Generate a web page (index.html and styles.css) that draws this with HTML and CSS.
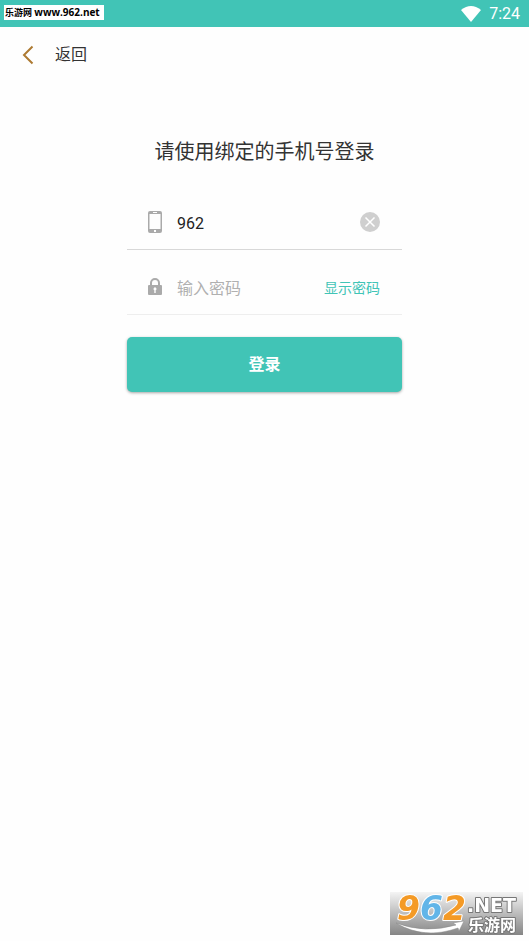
FILE: index.html
```html
<!DOCTYPE html>
<html lang="zh-CN">
<head>
<meta charset="utf-8">
<meta name="viewport" content="width=device-width, initial-scale=1">
<title>登录</title>
<link rel="stylesheet" href="styles.css">
</head>
<body>
<div class="status">
  <span class="site">乐游网 <span class="url">www.962.net</span></span>
  <span class="status-right">
    <svg class="wifi" viewBox="0 0 20 16" aria-hidden="true"><path d="M0 4Q10-4 20 4L10 16Z"/></svg>
    <time>7:24</time>
  </span>
</div>
<header class="nav">
  <a class="back" href="#">
    <svg class="chevron" viewBox="0 0 12 20" aria-hidden="true"><path d="M10.500 1.500 2 10l8.500 8.500"/></svg>
    返回
  </a>
</header>
<main class="login">
  <h1>请使用绑定的手机号登录</h1>
  <form>
    <div class="field">
      <label for="phone" aria-label="手机号">
        <svg class="icon" viewBox="0 0 16 24" aria-hidden="true"><path fill-rule="evenodd" d="M3 1h10q2 0 2 2v18q0 2-2 2H3q-2 0-2-2V3q0-2 2-2ZM2.500 4v15h11V4ZM6 2v1h4V2ZM7 20v2h2v-2Z"/></svg>
      </label>
      <input id="phone" type="text" value="962">
      <button class="clear" type="button" aria-label="清除">
        <svg viewBox="0 0 20 20" aria-hidden="true"><circle cx="10" cy="10" r="10"/><path d="m5.500 5.500 9 9m0-9-9 9"/></svg>
      </button>
    </div>
    <div class="field field-light">
      <label for="password" aria-label="密码">
        <svg class="icon" viewBox="0 0 16 24" aria-hidden="true"><path fill-rule="evenodd" d="M2 10h1V8a5 5 0 0 1 10 0v2h1q1 0 1 1v8q0 1-1 1H2q-1 0-1-1v-8q0-1 1-1Zm3 0h6V8a3 3 0 0 0-6 0Zm2.300 5.200V18h1.400v-2.800a1.500 1.500 0 1 0-1.400 0Z"/></svg>
      </label>
      <input id="password" type="password" placeholder="输入密码">
      <button class="reveal" type="button">显示密码</button>
    </div>
    <button class="submit" type="submit">登录</button>
  </form>
</main>
<svg class="brand" viewBox="0 0 133 43" role="img" aria-label="962.NET 乐游网">
  <defs>
    <linearGradient id="shade" x1="0" y1="0" x2="0" y2="1"><stop offset="0" stop-color="#f4f4f4"/><stop offset="1" stop-color="#858585"/></linearGradient>
  </defs>
  <rect width="133" height="43" fill="url(#shade)"/>
  <path class="swoosh" d="M6 31Q35 42 66 33l-3-2 11-2-5 10-1-3Q34 48 6 31Z"/>
  <text class="digits" x="7" y="28"><tspan fill="#f49a26">9</tspan><tspan fill="#62b5e8">6</tspan><tspan fill="#f49a26">2</tspan></text>
  <text class="net" x="77" y="20">.NET</text>
  <text class="name" x="78" y="39">乐游网</text>
</svg>
</body>
</html>
```
FILE: styles.css
```css
* { box-sizing: border-box; }
body {
  margin: 0;
  min-height: 100vh;
  background: #fefefe;
  color: #333;
  font: 16px/24px Roboto, "Noto Sans CJK SC", sans-serif;
}
button, input {
  font: inherit;
  color: inherit;
  border: 0;
  padding: 0;
  background: none;
}
.status {
  display: flex;
  align-items: center;
  justify-content: space-between;
  height: 27px;
  padding: 0 9px 0 4px;
  background: #41c4b6;
}
.site {
  margin-bottom: 2px;
  padding: 0 4px 0 1px;
  background: #fff;
  color: #000;
  font: bold 9px/14px "Open Sans", "Noto Sans CJK SC", sans-serif;
}
.url { font-size: 10px; }
.status-right {
  display: flex;
  align-items: center;
  gap: 8px;
  color: #fff;
}
.wifi { width: 20px; height: 16px; fill: #fff; }
.nav {
  display: flex;
  align-items: center;
  height: 54px;
  padding: 2px 22px 0;
}
.back {
  display: flex;
  align-items: center;
  gap: 21px;
  color: inherit;
  text-decoration: none;
}
.chevron {
  width: 12px;
  height: 20px;
  fill: none;
  stroke: #ad7a32;
  stroke-width: 2;
}
.login {
  width: 52%;
  margin: 0 auto;
  padding-top: 56px;
}
h1 {
  margin: 0 0 18px;
  font-size: 20px;
  font-weight: 400;
  line-height: 30px;
  text-align: center;
  white-space: nowrap;
}
form { display: flex; flex-direction: column; }
.field {
  display: flex;
  align-items: center;
  height: 65px;
  padding: 10px 22px 0 20px;
  border-bottom: 1px solid #d8d8d8;
}
.field-light { border-color: #eee; }
.field label { display: flex; margin-right: 14px; }
.icon { width: 16px; height: 24px; fill: #aaa; }
.field input {
  flex: 1;
  min-width: 0;
  height: 28px;
  padding-top: 2px;
  color: #222;
  outline: 0;
}
.field input::placeholder { color: #b0b0b0; opacity: 1; }
.clear { display: flex; }
.clear svg { width: 20px; height: 20px; fill: #cfcfcf; }
.clear path { stroke: #fff; stroke-width: 1.500; }
.reveal { padding-top: 2px; color: #41c4b6; font-size: 14px; }
.submit {
  height: 55px;
  margin-top: 22px;
  border-radius: 5px;
  background: #41c4b6;
  box-shadow: 0 1px 3px rgba(0, 0, 0, 0.35);
  color: #fff;
  font-weight: 700;
}
.brand {
  position: fixed;
  right: 6px;
  bottom: 6px;
  width: 133px;
  height: 43px;
  overflow: visible;
}
.brand text { paint-order: stroke; stroke-linejoin: round; }
.swoosh { fill: #fff; stroke: #888; stroke-width: 0.500; }
.digits {
  font: italic 700 33px "DejaVu Sans", sans-serif;
  stroke: #fff;
  stroke-width: 2;
}
.net {
  font: 700 19px "DejaVu Sans", sans-serif;
  fill: #fff;
  stroke: #777;
  stroke-width: 2;
}
.name {
  font: 700 16px "Noto Sans CJK SC", sans-serif;
  fill: #fff;
  stroke: #777;
  stroke-width: 2;
}
```
